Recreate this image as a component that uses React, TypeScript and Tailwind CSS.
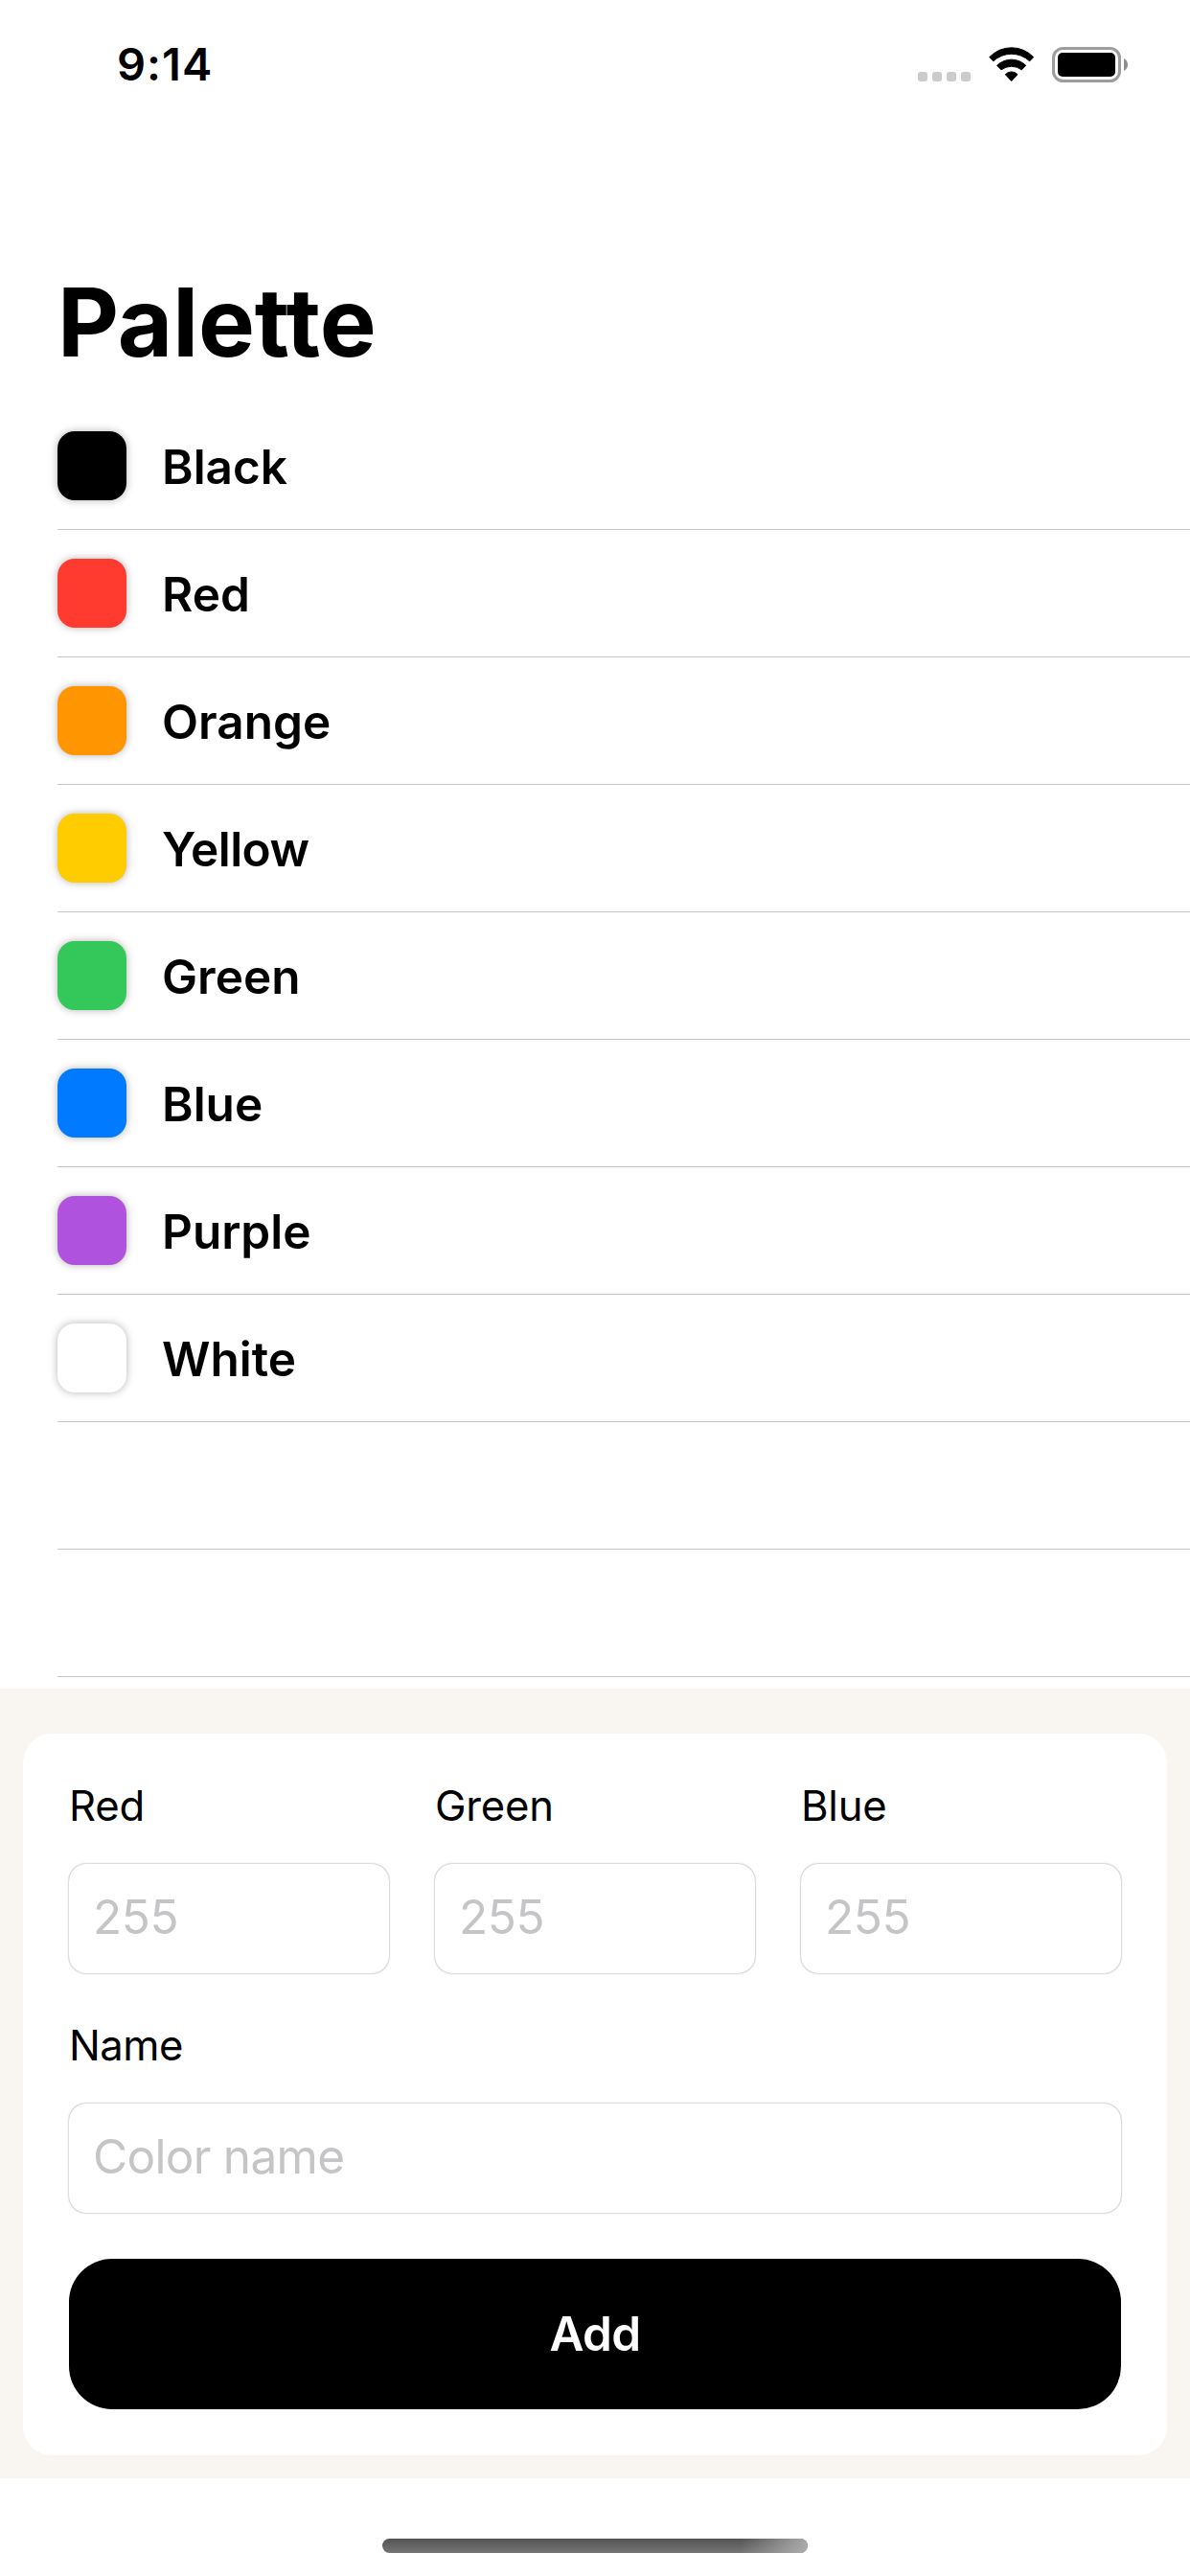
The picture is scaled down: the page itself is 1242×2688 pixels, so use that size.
type Swatch = { name: string; color: string; tracking?: string };

const SWATCHES: Swatch[] = [
  { name: "Black", color: "bg-black" },
  { name: "Red", color: "bg-[#ff3b30]" },
  { name: "Orange", color: "bg-[#ff9500]" },
  { name: "Yellow", color: "bg-[#ffcc00]", tracking: "tracking-[-0.5px]" },
  { name: "Green", color: "bg-[#34c759]" },
  { name: "Blue", color: "bg-[#007aff]" },
  { name: "Purple", color: "bg-[#af52de]" },
  { name: "White", color: "bg-white" },
];

function WifiIcon() {
  return (
    <svg viewBox="0 0 142 108" className="h-[36px] w-[47.33px]">
      <g fill="#000" stroke="#000" strokeWidth="3" strokeLinejoin="round">
        <path d="M2 32A95 95 0 0 1 140 32L128 44.5A83 83 0 0 0 14 44.5Z" />
        <path d="M26 58A64 64 0 0 1 116 58L103 71.5A53 53 0 0 0 39 71.5Z" />
        <path d="M52 86A26 26 0 0 1 90 86L71 106.5Z" />
      </g>
    </svg>
  );
}

function BatteryIcon() {
  return (
    <svg viewBox="0 0 79 37" className="h-[37px] w-[79px]">
      <rect x="1.5" y="1.5" width="69" height="34" rx="10" fill="none" stroke="#9d9d9d" strokeWidth="3" />
      <rect x="6" y="6" width="60" height="25" rx="5" fill="#000" />
      <path d="M75 12C77.700 13.200 79 15.700 79 18.500C79 21.300 77.700 23.800 75 25Z" fill="#8e8e8e" />
    </svg>
  );
}

function StatusBar() {
  return (
    <header className="flex h-[135px] items-center justify-between pr-[65px] pl-[122px]">
      <span className="pb-0.5 text-[47px] leading-none font-semibold tracking-[1px]">9:14</span>
      <div className="flex items-start">
        <div className="mt-[26px] flex gap-[5px]">
          {[0, 1, 2, 3].map((dot) => (
            <span key={dot} className="size-[10px] rounded-[3px] bg-[#cbcbcb]" />
          ))}
        </div>
        <div className="ml-[19px]">
          <WifiIcon />
        </div>
        <div className="ml-[18.67px]">
          <BatteryIcon />
        </div>
      </div>
    </header>
  );
}

function Field({ label, placeholder, tracking = "tracking-[-0.2px]", inputTracking = "tracking-[-0.4px]" }: {
  label: string;
  placeholder: string;
  tracking?: string;
  inputTracking?: string;
}) {
  return (
    <label className="flex min-w-0 flex-1 flex-col">
      <span className={`text-[43.6px] leading-[56px] ${tracking}`}>{label}</span>
      <input
        placeholder={placeholder}
        className={`mt-8 h-[114px] w-full rounded-[18px] bg-white pr-6 pb-1 pl-[25px] text-[49.5px] shadow-[0_0_2px_rgba(0,0,0,0.5)] outline-none placeholder:text-[#c5c5c7] ${inputTracking}`}
      />
    </label>
  );
}

export default function App() {
  return (
    <div className="flex h-[2688px] w-[1242px] flex-col overflow-hidden bg-white font-['Inter','Liberation_Sans',sans-serif] text-black">
      <StatusBar />
      <h1 className="mt-[141px] pl-[60px] text-[99px] leading-[120px] font-bold tracking-[-0.1px]">Palette</h1>

      <ul className="mt-6 flex h-[1342px] flex-col pl-[60px]">
        {SWATCHES.map(({ name, color, tracking = "tracking-[0px]" }) => (
          <li key={name} className="flex h-[133px] shrink-0 items-center border-b border-[#c6c6c8]">
            <span className={`size-[72px] rounded-[18px] shadow-[0_0_9px_rgba(0,0,0,0.3)] ${color}`} />
            <span className={`ml-[37px] pt-0.5 text-[49.5px] leading-[60px] font-[560] ${tracking}`}>{name}</span>
          </li>
        ))}
        {[0, 1].map((row) => (
          <li key={row} className="h-[133px] shrink-0 border-b border-[#c6c6c8]" />
        ))}
      </ul>

      <section className="bg-[#f9f5f0] px-6 pt-[47px] pb-6">
        <form className="flex flex-col gap-12 rounded-[30px] bg-white p-12">
          <div className="flex gap-12">
            <Field label="Red" placeholder="255" />
            <Field label="Green" placeholder="255" />
            <Field label="Blue" placeholder="255" />
          </div>
          <div className="flex">
            <Field
              label="Name"
              placeholder="Color name"
              tracking="tracking-[-0.5px]"
              inputTracking="tracking-[-0.7px]"
            />
          </div>
          <button
            type="button"
            className="h-[157px] rounded-[45px] bg-black text-[49.5px] font-[560] tracking-[-0.6px] text-white"
          >
            Add
          </button>
        </form>
      </section>

      <div className="mx-auto mt-[63px] h-[15px] w-[444px] overflow-hidden rounded-full bg-linear-to-b from-[#535353] to-[#757575]">
        <div className="ml-auto h-full w-[70px] bg-linear-to-r from-[#bdbdbd]/0 to-[#bdbdbd]/80" />
      </div>
    </div>
  );
}
